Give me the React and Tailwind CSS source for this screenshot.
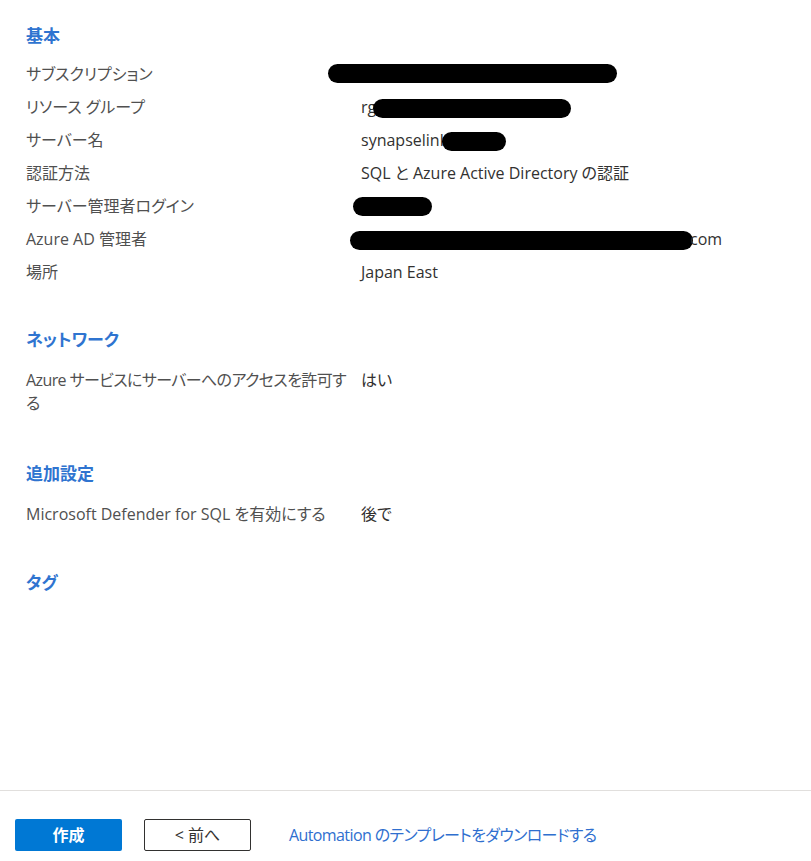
import React from "react";

const FONT = "font-['Open_Sans','Noto_Sans_CJK_JP',sans-serif] [font-feature-settings:'palt']";

// black marker strokes that hide private values
const Blot = ({ className }) => (
    <span className={`inline-block h-[19px] rounded-full bg-black align-middle ${className}`} />
);

const Heading = ({ children, className = "" }) => (
    <h2 className={`text-[17px] leading-6 font-semibold text-[#2f74d0] ${className}`}>{children}</h2>
);

const Row = ({ label, children }) => (
    <div className="flex py-[5px] text-[16px] leading-[23px]">
        <div className="w-[335px] shrink-0 text-[#505050]">{label}</div>
        <div className="flex-1 text-[#323130] whitespace-nowrap">{children}</div>
    </div>
);

export default function App() {
    return (
        <div className={`flex h-screen flex-col bg-white ${FONT}`}>
            <div className="flex-1 pl-[26px] pt-[24px]">
                <Heading>基本</Heading>
                <div className="mt-[10px]">
                    <Row label="サブスクリプション">
                        <Blot className="-ml-[33px] w-[289px] -mt-[4px]" />
                    </Row>
                    <Row label="リソース グループ">
                        rg<Blot className="-ml-[3px] w-[198px]" />
                    </Row>
                    <Row label="サーバー名">
                        synapselink<Blot className="-ml-[6px] w-[64px]" />
                    </Row>
                    <Row label="認証方法">SQL と Azure Active Directory の認証</Row>
                    <Row label="サーバー管理者ログイン">
                        <Blot className="-ml-[8px] w-[79px] -mt-[3px]" />
                    </Row>
                    <Row label="Azure AD 管理者">
                        <Blot className="-ml-[11px] w-[343px]" />
                        <span className="-ml-[3px]">com</span>
                    </Row>
                    <Row label="場所">Japan East</Row>
                </div>

                <Heading className="mt-[39px]">ネットワーク</Heading>
                <div className="mt-[12px]">
                    <Row
                        label={
                            <>
                                <span className="whitespace-nowrap tracking-[-0.6px]">Azure サービスにサーバーへのアクセスを許可す</span>
                                <br />る
                            </>
                        }
                    >
                        はい
                    </Row>
                </div>

                <Heading className="mt-[42px]">追加設定</Heading>
                <div className="mt-[12px]">
                    <Row label="Microsoft Defender for SQL を有効にする">後で</Row>
                </div>

                <Heading className="mt-[40px]">タグ</Heading>
            </div>

            <div className="flex items-center border-t border-[#e1dfdd] pl-[15px] pt-[28px] pb-[10px]">
                <button className="h-[32px] w-[107px] rounded-[2px] bg-[#0078d4] text-[16px] font-semibold text-white">
                    作成
                </button>
                <button className="ml-[22px] h-[32px] w-[107px] rounded-[2px] border border-[#323130] bg-white text-[16px] text-[#323130]">
                    &lt;&nbsp;前へ
                </button>
                <a className="ml-[38px] text-[16px] tracking-[-0.6px] text-[#2f6fcf]">
                    Automation のテンプレートをダウンロードする
                </a>
            </div>
        </div>
    );
}
